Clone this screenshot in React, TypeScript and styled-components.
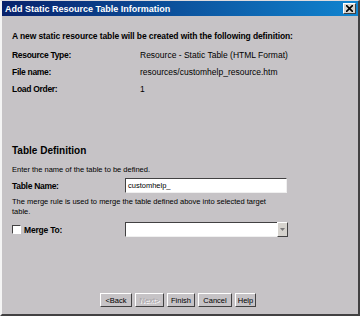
import React from 'react';
import styled, { createGlobalStyle } from 'styled-components';

const GlobalStyle = createGlobalStyle`
  html, body {
    margin: 0;
    padding: 0;
    background: #c6c3c6;
  }
  * {
    box-sizing: border-box;
  }
`;

const Window = styled.div`
  width: 360px;
  height: 316px;
  display: flex;
  flex-direction: column;
  background: #c6c3c6;
  border-top: 1px solid #dedbde;
  border-left: 2px solid #f4f4f4;
  border-right: 2px solid #424142;
  border-bottom: 2px solid #424142;
  font-family: 'Liberation Sans', Arial, sans-serif;
  color: #000;
`;

const TitleBar = styled.div`
  height: 15px;
  display: flex;
  align-items: center;
  justify-content: space-between;
  padding: 0 2px 0 3px;
  background: linear-gradient(to right, #08216b, #1084d0);
  color: #fff;
  font-size: 9px;
  font-weight: bold;
`;

const CloseButton = styled.div`
  width: 13px;
  height: 11px;
  display: flex;
  align-items: center;
  justify-content: center;
  background: #d6d3ce;
  border-top: 1px solid #fff;
  border-left: 1px solid #fff;
  border-right: 1px solid #424142;
  border-bottom: 1px solid #424142;
`;

const Body = styled.div`
  flex: 1;
  display: flex;
  flex-direction: column;
  padding: 13px 0 0 10px;
`;

const Intro = styled.div`
  font-size: 8.5px;
  font-weight: bold;
  letter-spacing: -0.1px;
  height: 14px;
  line-height: 14px;
  margin-bottom: 3px;
`;

const InfoRow = styled.div`
  display: grid;
  grid-template-columns: 128px 1fr;
  height: 17px;
  align-items: center;
`;

const Label = styled.span`
  font-weight: bold;
  font-size: 8.5px;
  letter-spacing: -0.3px;
`;

const Value = styled.span`
  font-size: 8.5px;
`;

const SectionTitle = styled.div`
  margin-top: 46px;
  font-size: 10px;
  font-weight: bold;
  height: 16px;
  line-height: 16px;
`;

const Hint = styled.div<{ $top: number }>`
  font-size: 7.5px;
  line-height: 10px;
  margin-top: ${({ $top }) => $top}px;
  width: 262px;
`;

const FieldRow = styled.div<{ $top: number }>`
  display: grid;
  grid-template-columns: 113px auto;
  align-items: center;
  margin-top: ${({ $top }) => $top}px;
  height: 15px;
`;

const CheckLabel = styled.label`
  display: flex;
  align-items: center;
  gap: 3px;
  font-size: 8.5px;
  font-weight: bold;
  letter-spacing: -0.2px;
`;

const CheckBox = styled.span`
  width: 9px;
  height: 9px;
  background: #fff;
  border-top: 1px solid #424142;
  border-left: 1px solid #424142;
  border-right: 1px solid #fff;
  border-bottom: 1px solid #fff;
`;

const TextInput = styled.div`
  width: 162px;
  height: 15px;
  background: #fff;
  border-top: 1px solid #424142;
  border-left: 1px solid #424142;
  border-right: 1px solid #f0f0f0;
  border-bottom: 1px solid #f0f0f0;
  font-size: 7.5px;
  line-height: 13px;
  padding-left: 2px;
`;

const Combo = styled.div`
  display: flex;
  width: 163px;
  height: 15px;
`;

const ComboField = styled.div`
  flex: 1;
  background: #fff;
  border-top: 1px solid #424142;
  border-left: 1px solid #424142;
  border-bottom: 1px solid #f0f0f0;
`;

const ComboButton = styled.div`
  width: 11px;
  display: flex;
  align-items: center;
  justify-content: center;
  background: #d6d3ce;
  border-top: 1px solid #fff;
  border-left: 1px solid #fff;
  border-right: 1px solid #424142;
  border-bottom: 1px solid #424142;
`;

const ButtonBar = styled.div`
  margin-top: auto;
  margin-bottom: 7px;
  display: flex;
  justify-content: center;
  gap: 3px;
  padding-right: 14px;
`;

const Button = styled.div<{ $w: number; $disabled?: boolean }>`
  width: ${({ $w }) => $w}px;
  height: 14px;
  display: flex;
  align-items: center;
  justify-content: center;
  font-size: 7.5px;
  background: #c6c3c6;
  color: ${({ $disabled }) => ($disabled ? '#a5a2a5' : '#000')};
  text-shadow: ${({ $disabled }) => ($disabled ? '1px 1px 0 #fff' : 'none')};
  border-top: 1px solid #fff;
  border-left: 1px solid #fff;
  border-right: 1px solid #424142;
  border-bottom: 1px solid #424142;
`;

const App: React.FC = () => {
  return (
    <>
      <GlobalStyle />
      <Window>
        <TitleBar>
          <span>Add Static Resource Table Information</span>
          <CloseButton>
            <svg width="7" height="7" viewBox="0 0 7 7">
              <path d="M0 0 L7 7 M7 0 L0 7" stroke="#000" strokeWidth="1.6" />
            </svg>
          </CloseButton>
        </TitleBar>
        <Body>
          <Intro>A new static resource table will be created with the following definition:</Intro>
          <InfoRow>
            <Label>Resource Type:</Label>
            <Value>Resource - Static Table (HTML Format)</Value>
          </InfoRow>
          <InfoRow>
            <Label>File name:</Label>
            <Value>resources/customhelp_resource.htm</Value>
          </InfoRow>
          <InfoRow>
            <Label>Load Order:</Label>
            <Value>1</Value>
          </InfoRow>

          <SectionTitle>Table Definition</SectionTitle>
          <Hint $top={6}>Enter the name of the table to be defined.</Hint>
          <FieldRow $top={3}>
            <Label>Table Name:</Label>
            <TextInput>customhelp_</TextInput>
          </FieldRow>
          <Hint $top={4}>
            The merge rule is used to merge the table defined above into selected target table.
          </Hint>
          <FieldRow $top={5}>
            <CheckLabel>
              <CheckBox />
              Merge To:
            </CheckLabel>
            <Combo>
              <ComboField />
              <ComboButton>
                <svg width="5" height="3" viewBox="0 0 5 3">
                  <path d="M0 0 H5 L2.5 3 Z" fill="#7b797b" />
                </svg>
              </ComboButton>
            </Combo>
          </FieldRow>

          <ButtonBar>
            <Button $w={32}>&lt;Back</Button>
            <Button $w={29} $disabled>Next&gt;</Button>
            <Button $w={28}>Finish</Button>
            <Button $w={34}>Cancel</Button>
            <Button $w={21}>Help</Button>
          </ButtonBar>
        </Body>
      </Window>
    </>
  );
};

export default App;
